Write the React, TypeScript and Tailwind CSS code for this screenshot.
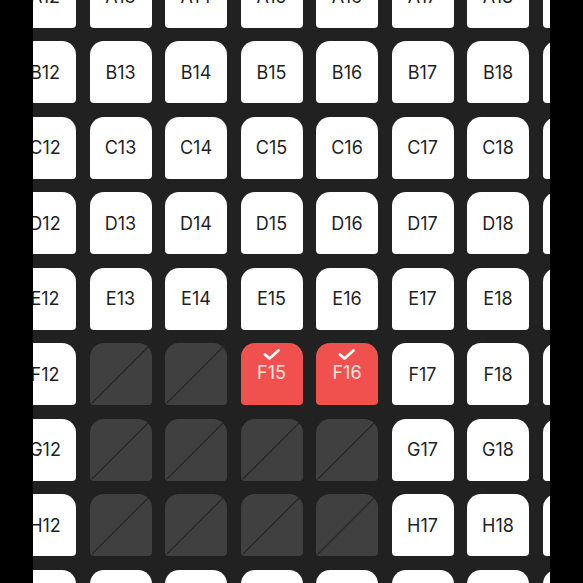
import React from "react";

type SeatState = "free" | "taken" | "picked";

const ROWS = ["A", "B", "C", "D", "E", "F", "G", "H", "I"];
const COLS = [12, 13, 14, 15, 16, 17, 18, 19];

const TAKEN = new Set(["F13", "F14", "G13", "G14", "G15", "G16", "H13", "H14", "H15", "H16"]);
const PICKED = new Set(["F15", "F16"]);

const seatState = (id: string): SeatState => {
  if (PICKED.has(id)) return "picked";
  if (TAKEN.has(id)) return "taken";
  return "free";
};

const Seat = ({ id }: { id: string }) => {
  const state = seatState(id);

  if (state === "taken") {
    return (
      <div className="w-[62px] h-[62px] rounded-t-[14px] rounded-b-[4px] bg-[#404040] overflow-hidden">
        <svg width="62" height="62" viewBox="0 0 62 62">
          <line x1="2" y1="60" x2="58" y2="4" stroke="#262626" strokeWidth="1.3" />
        </svg>
      </div>
    );
  }

  if (state === "picked") {
    return (
      <div className="w-[62px] h-[62px] rounded-t-[14px] rounded-b-[4px] bg-[#f0514f] flex flex-col items-center pt-[5px]">
        <svg width="20" height="13" viewBox="0 0 20 13">
          <path d="M3 6.5 L7.5 10.5 L16.5 2.5" fill="none" stroke="#ffffff" strokeWidth="2.8" strokeLinecap="round" strokeLinejoin="round" />
        </svg>
        <span className="mt-[2px] text-[18px] leading-[20px] text-[#fbe3df] font-['Inter',sans-serif]">{id}</span>
      </div>
    );
  }

  return (
    <div className="w-[62px] h-[62px] rounded-t-[14px] rounded-b-[4px] bg-white flex items-center justify-center">
      <span className="text-[18px] text-[#1f1f1f] font-['Inter',sans-serif]">{id}</span>
    </div>
  );
};

const App = () => {
  return (
    <div className="w-[583px] h-[583px] bg-black flex">
      <div className="ml-[33px] w-[517px] h-[583px] overflow-hidden bg-[#212121]">
        <div className="-ml-[19px] -mt-[34.5px] grid grid-cols-[repeat(8,62px)] gap-[13.5px]">
          {ROWS.map((r) =>
            COLS.map((c) => <Seat key={r + c} id={r + c} />)
          )}
        </div>
      </div>
    </div>
  );
};

export default App;
